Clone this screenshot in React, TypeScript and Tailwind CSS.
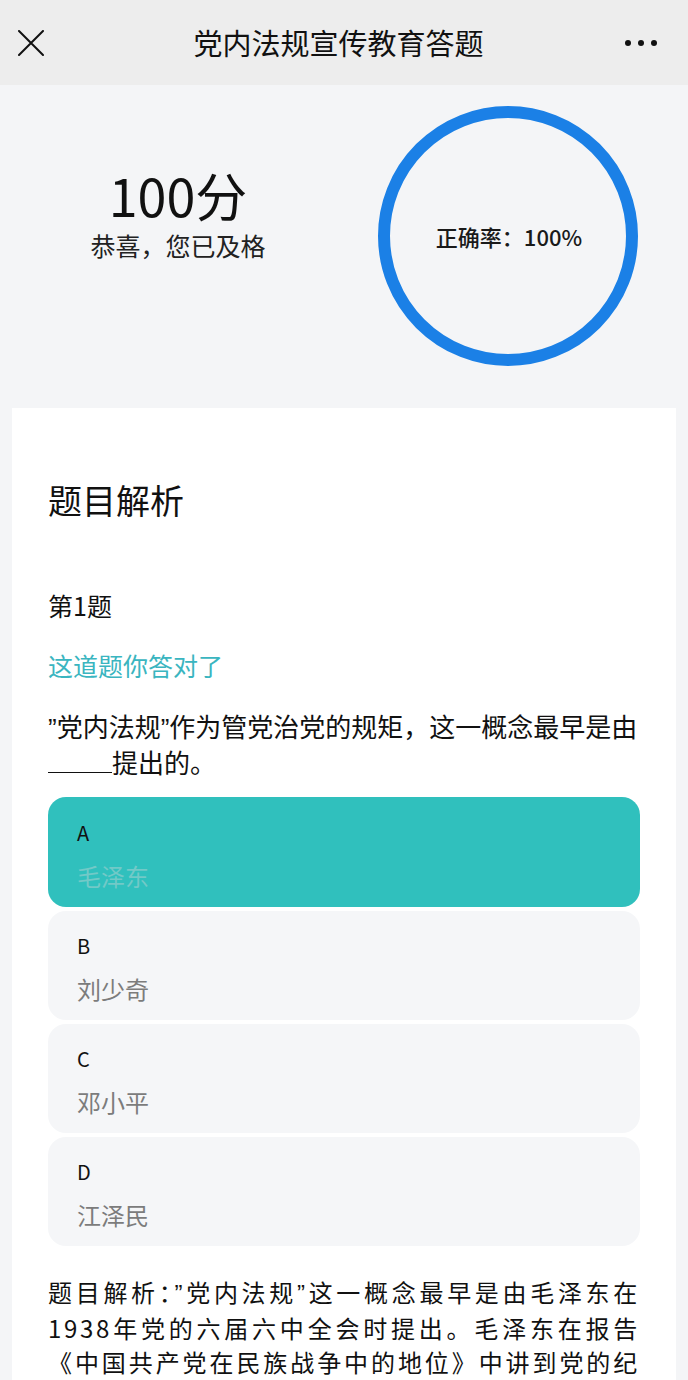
import React from "react";

const font = "font-['Noto_Sans_CJK_SC','Noto_Sans',sans-serif]";

const options = [
  { key: "A", name: "毛泽东", correct: true },
  { key: "B", name: "刘少奇" },
  { key: "C", name: "邓小平" },
  { key: "D", name: "江泽民" },
];

// narrow latin quotes, as in the screenshot
function Q({ children }: { children: React.ReactNode }) {
  return <span className="font-['Liberation_Sans',sans-serif]">{children}</span>;
}

function Ring() {
  return (
    <div className="relative h-[260px] w-[260px]">
      <svg viewBox="0 0 260 260" className="absolute inset-0 h-full w-full">
        <circle cx="130" cy="130" r="124" fill="none" stroke="#1b80e6" strokeWidth="12" />
      </svg>
      <div className="relative flex h-full items-center justify-center pl-[2px] text-[22px] font-medium text-[#1a1a1a]">
        正确率：100%
      </div>
    </div>
  );
}

export default function App() {
  return (
    <div className={`${font} min-h-[1380px] bg-[#f4f5f7] text-[#111]`}>
      {/* top bar */}
      <header className="flex h-[85px] items-center justify-between bg-[#ededed] px-[18px]">
        <svg width="26" height="26" viewBox="0 0 26 26" className="mt-[1px]">
          <path d="M1 1L25 25M25 1L1 25" stroke="#111" strokeWidth="2" strokeLinecap="round" />
        </svg>
        <h1 className="ml-[8px] text-[29px] leading-none text-[#111]">党内法规宣传教育答题</h1>
        <div className="mr-[13px] flex items-center gap-[7px]">
          <span className="h-[6px] w-[6px] rounded-full bg-[#111]" />
          <span className="h-[6px] w-[6px] rounded-full bg-[#111]" />
          <span className="h-[6px] w-[6px] rounded-full bg-[#111]" />
        </div>
      </header>

      {/* score */}
      <section className="flex pt-[21px] pb-[42px]">
        <div className="flex w-[356px] flex-col items-center pt-[60px]">
          <div className="text-[52px] leading-[58px]">100分</div>
          <div className="mt-[4px] text-[25px] leading-[34px] text-[#222]">恭喜，您已及格</div>
        </div>
        <div className="ml-[22px]">
          <Ring />
        </div>
      </section>

      {/* analysis card */}
      <section className="mx-[12px] bg-white px-[36px] pt-[70px] pb-[40px]">
        <h2 className="text-[34px] leading-[44px]">题目解析</h2>
        <div className="mt-[65px] text-[25px] leading-[36px]">第1题</div>
        <div className="mt-[24px] text-[25px] leading-[36px] text-[#3ab5c0]">这道题你答对了</div>
        <p className="mt-[26px] text-[26px] leading-[34px]">
          <Q>”</Q>党内法规<Q>”</Q>作为管党治党的规矩，这一概念最早是由
          <span className="inline-block w-[64px] border-b-[1.5px] border-[#111]" />
          提出的。
        </p>

        <div className="mt-[18px] flex flex-col gap-[4px]">
          {options.map((o) => (
            <div
              key={o.key}
              className={
                o.correct
                  ? "h-[110px] rounded-[18px] bg-[#30c0bd] px-[29px] pt-[22px]"
                  : "h-[109px] rounded-[18px] bg-[#f5f6f8] px-[29px] pt-[21px]"
              }
            >
              <div className="text-[20px] leading-[28px]">{o.key}</div>
              <div
                className={
                  o.correct
                    ? "mt-[13px] text-[24px] leading-[32px] text-[#72c9c7]"
                    : "mt-[13px] text-[24px] leading-[32px] text-[#7c7c7c]"
                }
              >
                {o.name}
              </div>
            </div>
          ))}
        </div>

        <p className="mt-[29px] text-justify text-[24px] leading-[34px] tracking-[2.7px]">
          题目解析：<Q>”</Q>党内法规<Q>”</Q>这一概念最早是由毛泽东在1938年党的六届六中全会时提出。毛泽东在报告《中国共产党在民族战争中的地位》中讲到党的纪律时指出：<Q>”</Q>为使党内关系走上正轨，除了上述四项最重要的纪律外，还须制定一种较详细的党内法规，以统一各级领导机关的行动。<Q>”</Q>
        </p>
      </section>
    </div>
  );
}
